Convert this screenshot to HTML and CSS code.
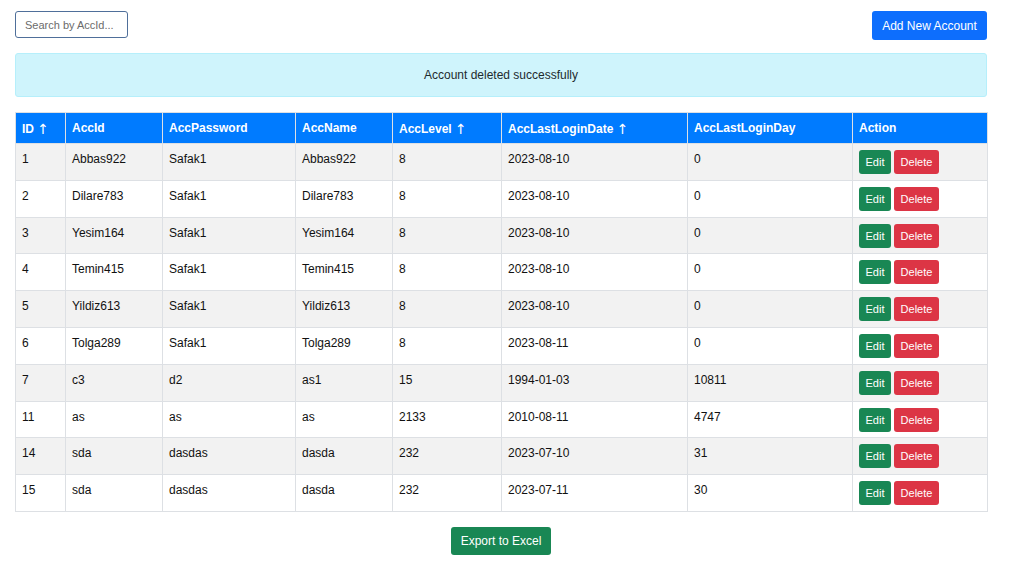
FILE: index.html
```html
<!DOCTYPE html>
<html>
<head>
<meta charset="utf-8">
<link rel="stylesheet" href="styles.css">
</head>
<body>
<div class="page">
  <div class="toolbar">
    <input class="search" type="text" placeholder="Search by AccId...">
    <button class="btn btn-primary">Add New Account</button>
  </div>
  <div class="alert">Account deleted successfully</div>
  <table class="grid">
    <colgroup>
      <col class="c-id"><col class="c-accid"><col class="c-pass"><col class="c-name"><col class="c-level"><col class="c-date"><col class="c-day"><col class="c-action">
    </colgroup>
    <thead>
      <tr><th>ID <span class="arrow">↑</span></th><th>AccId</th><th>AccPassword</th><th>AccName</th><th>AccLevel <span class="arrow">↑</span></th><th>AccLastLoginDate <span class="arrow">↑</span></th><th>AccLastLoginDay</th><th>Action</th></tr>
    </thead>
    <tbody>
      <tr><td>1</td><td>Abbas922</td><td>Safak1</td><td>Abbas922</td><td>8</td><td>2023-08-10</td><td>0</td><td class="actions"><button class="sm edit">Edit</button><button class="sm del">Delete</button></td></tr>
      <tr><td>2</td><td>Dilare783</td><td>Safak1</td><td>Dilare783</td><td>8</td><td>2023-08-10</td><td>0</td><td class="actions"><button class="sm edit">Edit</button><button class="sm del">Delete</button></td></tr>
      <tr><td>3</td><td>Yesim164</td><td>Safak1</td><td>Yesim164</td><td>8</td><td>2023-08-10</td><td>0</td><td class="actions"><button class="sm edit">Edit</button><button class="sm del">Delete</button></td></tr>
      <tr><td>4</td><td>Temin415</td><td>Safak1</td><td>Temin415</td><td>8</td><td>2023-08-10</td><td>0</td><td class="actions"><button class="sm edit">Edit</button><button class="sm del">Delete</button></td></tr>
      <tr><td>5</td><td>Yildiz613</td><td>Safak1</td><td>Yildiz613</td><td>8</td><td>2023-08-10</td><td>0</td><td class="actions"><button class="sm edit">Edit</button><button class="sm del">Delete</button></td></tr>
      <tr><td>6</td><td>Tolga289</td><td>Safak1</td><td>Tolga289</td><td>8</td><td>2023-08-11</td><td>0</td><td class="actions"><button class="sm edit">Edit</button><button class="sm del">Delete</button></td></tr>
      <tr><td>7</td><td>c3</td><td>d2</td><td>as1</td><td>15</td><td>1994-01-03</td><td>10811</td><td class="actions"><button class="sm edit">Edit</button><button class="sm del">Delete</button></td></tr>
      <tr><td>11</td><td>as</td><td>as</td><td>as</td><td>2133</td><td>2010-08-11</td><td>4747</td><td class="actions"><button class="sm edit">Edit</button><button class="sm del">Delete</button></td></tr>
      <tr><td>14</td><td>sda</td><td>dasdas</td><td>dasda</td><td>232</td><td>2023-07-10</td><td>31</td><td class="actions"><button class="sm edit">Edit</button><button class="sm del">Delete</button></td></tr>
      <tr><td>15</td><td>sda</td><td>dasdas</td><td>dasda</td><td>232</td><td>2023-07-11</td><td>30</td><td class="actions"><button class="sm edit">Edit</button><button class="sm del">Delete</button></td></tr>
    </tbody>
  </table>
  <div class="footer">
    <button class="btn btn-success">Export to Excel</button>
  </div>
</div>
</body>
</html>
```
FILE: styles.css
```css
* { box-sizing: border-box; }
html, body { margin: 0; padding: 0; background: #fff; }
body { font-family: "Liberation Sans", Arial, sans-serif; font-size: 12px; color: #212529; }
.page { padding: 11px 27px 0 15px; }
.toolbar { display: flex; justify-content: space-between; align-items: flex-start; }
.search {
  width: 113px; height: 27px; margin: 0; padding: 0 9px;
  border: 1px solid #4f6f9a; border-radius: 3px;
  font-family: "Liberation Sans", Arial, sans-serif; font-size: 11px; color: #333;
  outline: none;
}
.search::placeholder { color: #6b6b6b; }
.btn {
  border: none; border-radius: 3px; color: #fff; cursor: pointer;
  font-family: "Liberation Sans", Arial, sans-serif; font-size: 12px;
  height: 29px; padding: 0; margin: 0; white-space: nowrap;
}
.btn-primary { background: #0d6efd; width: 115px; }
.btn-success { background: #198754; height: 28px; width: 100px; }
.alert {
  margin-top: 13px; height: 44px;
  background: #cff4fc; border: 1px solid #b6effb; border-radius: 3px;
  color: #1d2a2e; display: flex; align-items: center; justify-content: center;
  font-size: 12px;
}
.grid {
  margin-top: 15px; width: 972px; border-collapse: collapse; table-layout: fixed;
}
.c-id { width: 50px; }
.c-accid { width: 97px; }
.c-pass { width: 133px; }
.c-name { width: 97px; }
.c-level { width: 109px; }
.c-date { width: 186px; }
.c-day { width: 165px; }
.c-action { width: 135px; }
.grid th, .grid td { border: 1px solid #dde0e4; text-align: left; }
.grid th {
  background: #007bff; color: #fff; font-weight: bold; height: 31px;
  padding: 0 6px; vertical-align: middle; border-color: #dde0e4;
}
.arrow { font-size: 14px; font-weight: normal; font-family: "DejaVu Sans", sans-serif; position: relative; top: 1px; }
.grid tbody tr { height: 36.8px; }
.grid td { padding: 8px 6px 0 6px; vertical-align: top; color: #111; }
.grid tbody tr:nth-child(odd) { background: #f2f2f2; }
.grid td.actions { padding: 6px 6px 0 6px; }
.sm {
  border: none; border-radius: 3px; color: #fff; cursor: pointer;
  font-family: "Liberation Sans", Arial, sans-serif; font-size: 11px;
  height: 24px; padding: 0; margin: 0 3px 0 0; vertical-align: top;
}
.edit { background: #198754; width: 32px; }
.del { background: #dc3545; width: 45px; }
.footer { display: flex; justify-content: center; margin-top: 15px; }
```
